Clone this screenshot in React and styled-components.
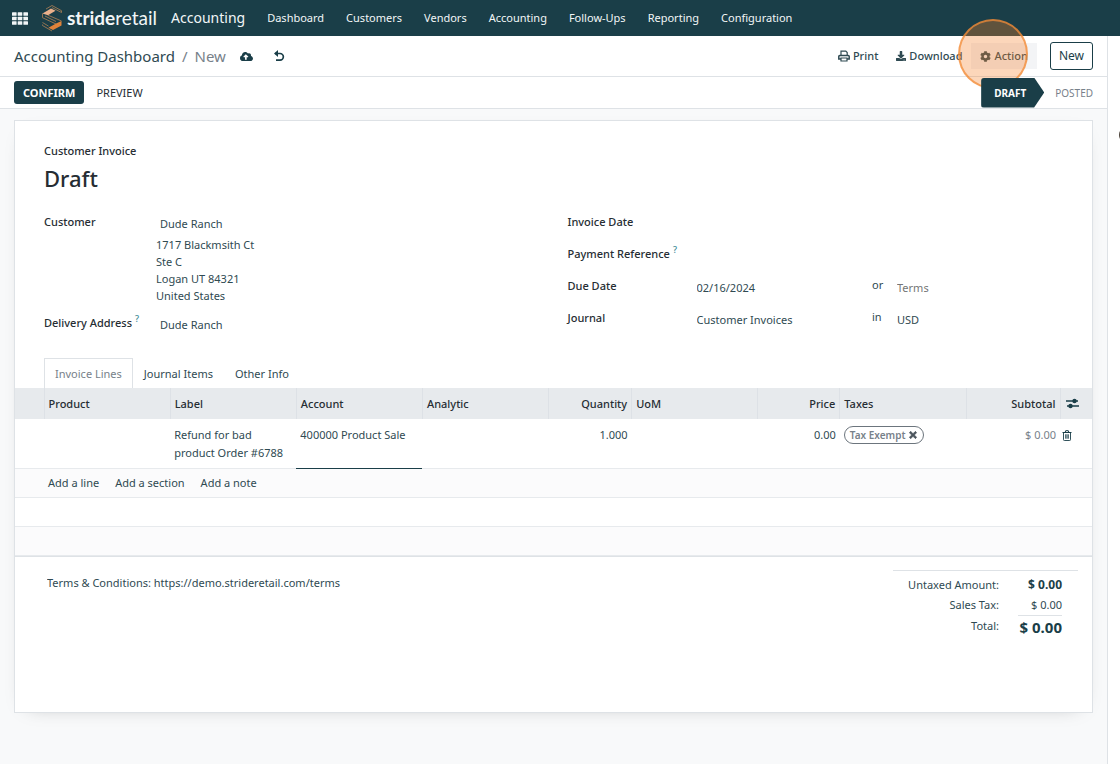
import React from "react";
import styled, { createGlobalStyle } from "styled-components";
import {
  FaCloudUploadAlt,
  FaDownload,
  FaCog,
  FaTimes,
} from "react-icons/fa";

const GlobalStyle = createGlobalStyle`
  :root {
    --brand: #1a3e48;
    --text: #2f4a52;
    --dark: #262d33;
    --muted: #77818a;
    --line: #dee2e6;
  }

  * {
    box-sizing: border-box;
  }

  body {
    margin: 0;
    background: #fff;
    color: var(--text);
    font-family: "Noto Sans", "Open Sans", sans-serif;
    font-size: 11px;
    line-height: 18px;
  }

  button,
  input,
  textarea {
    font: inherit;
    color: inherit;
    background: none;
    border: 0;
    margin: 0;
    padding: 0;
  }

  button {
    cursor: pointer;
    white-space: nowrap;
  }

  a {
    color: inherit;
    text-decoration: none;
  }
`;

const Page = styled.div`
  display: flex;
  flex-direction: column;
  min-height: 100vh;
`;

const Navbar = styled.nav`
  display: flex;
  align-items: center;
  height: 36px;
  padding-left: 12px;
  background: var(--brand);
  color: #f2f6f7;
`;

const AppsButton = styled.button`
  display: flex;
  margin-right: 13px;
`;

const Brand = styled.a`
  display: flex;
  align-items: center;
  gap: 4px;
  margin-right: 14px;
  font-family: Lato, sans-serif;
  font-size: 19px;
  line-height: 24px;

  b {
    font-weight: 700;
  }
`;

const AppName = styled.a`
  margin-right: 11px;
  font-size: 14px;
  line-height: 24px;
`;

const NavLink = styled.a`
  padding: 0 11px;
`;

const Columns = styled.div`
  display: flex;
  flex: 1;
`;

const Main = styled.main`
  display: flex;
  flex-direction: column;
  flex: 1;
  min-width: 0;
  background: #f8f9fa;
`;

const Chatter = styled.aside`
  width: 13px;
  border-left: 1px solid var(--line);
  background: #fff;
  overflow: hidden;
`;

const Avatar = styled.div`
  width: 20px;
  height: 16px;
  margin: 91px 0 0 11px;
  border-radius: 8px;
  background: #4a4038;
`;

const Bar = styled.div`
  display: flex;
  align-items: center;
  height: ${({ $height }) => $height}px;
  padding: 0 14px;
  border-bottom: 1px solid var(--line);
  background: #fff;
`;

const Breadcrumb = styled.div`
  display: flex;
  gap: 7px;
  font-size: 15px;
  line-height: 24px;
  color: var(--muted);

  a {
    color: var(--text);
  }
`;

const IconButton = styled.button`
  display: flex;
  align-items: center;
  height: 18px;
  margin-left: ${({ $gap }) => $gap}px;
  color: var(--brand);
`;

const Actions = styled.div`
  display: flex;
  align-items: center;
  margin-left: auto;
`;

const ActionButton = styled.button`
  display: flex;
  align-items: center;
  gap: 3px;
  height: 26px;
  padding: 0 9px;
  font-weight: 500;
  color: var(--text);
  background: ${({ $active }) => ($active ? "#f3f4f6" : "none")};
`;

const ActionWrap = styled.div`
  position: relative;
`;

const ClickMark = styled.span`
  position: absolute;
  top: -24px;
  left: -13px;
  width: 70px;
  height: 70px;
  border: 2px solid rgba(242, 140, 56, 0.75);
  border-radius: 50%;
  background: rgba(247, 129, 41, 0.32);
  pointer-events: none;
`;

const NewButton = styled.button`
  height: 28px;
  margin-left: 13px;
  padding: 0 8px;
  border: 1px solid var(--brand);
  border-radius: 3px;
  color: var(--brand);
  font-size: 12px;
`;

const Confirm = styled.button`
  height: 23px;
  padding: 0 9px;
  border-radius: 3px;
  background: var(--brand);
  color: #fff;
  font-weight: 700;
`;

const Preview = styled.button`
  padding: 0 12px;
  color: var(--dark);
`;

const Status = styled.div`
  display: flex;
  align-items: center;
  margin-left: auto;
  font-size: 10px;
`;

const StatusCurrent = styled.button`
  height: 30px;
  padding: 0 18px 0 13px;
  border-radius: 3px;
  background: var(--brand);
  color: #fff;
  font-weight: 700;
  clip-path: polygon(0 0, 84% 0, 100% 50%, 84% 100%, 0 100%);
`;

const StatusNext = styled.button`
  padding-left: 11px;
  color: var(--muted);
`;

const Sheet = styled.form`
  display: flex;
  flex-direction: column;
  min-height: 593px;
  margin: 11px 14px 52px;
  border: 1px solid var(--line);
  background: #fff;
  box-shadow: 0 5px 20px -15px rgba(0, 0, 0, 0.4);
`;

const Heading = styled.header`
  padding: 21px 29px 0;
  font-weight: 500;
  color: var(--dark);

  h1 {
    margin: 2px 0 0;
    font-size: 22px;
    line-height: 32px;
    font-weight: 500;
  }
`;

const Groups = styled.div`
  display: grid;
  grid-template-columns: 1fr 1fr;
  padding: 18px 29px 0;
`;

const Group = styled.div`
  display: flex;
  flex-direction: column;
  gap: ${({ $gap }) => $gap}px;
  padding-left: ${({ $indent }) => $indent || 0}px;
`;

const Row = styled.div`
  display: grid;
  grid-template-columns: ${({ $label }) => $label}px 1fr 25px 166px;
  align-items: start;
  min-height: 22px;
`;

const Label = styled.label`
  padding-top: 1px;
  font-weight: 500;
  color: var(--dark);

  sup {
    color: #3c8a96;
    font-size: 9px;
    line-height: 9px;
    margin-left: 3px;
  }
`;

const Field = styled.input`
  width: 100%;
  min-width: 0;
  height: 22px;
  padding-top: 1px;
  text-overflow: ellipsis;
  color: ${({ $muted }) => ($muted ? "var(--muted)" : "var(--text)")};
`;

const Partner = styled.div`
  grid-column: 2 / -1;
  padding-left: 4px;
`;

const Address = styled.address`
  margin: 2px 0 0 -4px;
  font-style: normal;
  line-height: 17px;
`;

const Tabs = styled.div`
  display: flex;
  padding: 0 29px;
  margin: 23px 0 -1px;
`;

const Tab = styled.button`
  height: 31px;
  padding: 0 10px;
  border: 1px solid ${({ $active }) => ($active ? "var(--line)" : "transparent")};
  border-bottom: 0;
  background: #fff;
  color: ${({ $active }) => ($active ? "var(--muted)" : "var(--text)")};
`;

const Lines = styled.table`
  width: 100%;
  table-layout: fixed;
  border-collapse: collapse;

  th,
  td {
    padding: 0 4px;
    text-align: left;
  }

  th {
    height: 31px;
    border-right: 1px solid #dde1e6;
    background: #e7eaed;
    color: var(--dark);
    font-weight: 500;
  }

  th:last-child {
    border-right: 0;
    padding: 0 5px;
  }

  td {
    height: 29px;
    border-bottom: 1px solid #e7eaed;
  }
`;

const LineRow = styled.tr`
  td {
    height: 49px;
    padding-top: 7px;
    vertical-align: top;
  }
`;

const StripedRow = styled.tr`
  background: ${({ $shade }) => ($shade ? "#fbfbfc" : "#fff")};
`;

const AccountCell = styled.td`
  && {
    border-bottom: 1px solid var(--brand);
  }
`;

const CellInput = styled.input`
  display: block;
  width: 100%;
  height: 18px;
  text-align: ${({ $right }) => ($right ? "right" : "left")};
`;

const CellText = styled.textarea`
  display: block;
  width: 100%;
  height: 36px;
  resize: none;
  overflow: hidden;
`;

const NumberHead = styled.th`
  && {
    text-align: right;
  }
`;

const Amount = styled.td`
  && {
    text-align: right;
    color: var(--muted);
  }
`;

const Tag = styled.span`
  display: inline-flex;
  align-items: center;
  gap: 3px;
  height: 18px;
  padding: 0 5px;
  border: 1px solid #6c757d;
  border-radius: 9px;
  color: var(--muted);
  font-size: 10px;
  font-weight: 600;
  white-space: nowrap;

  button {
    display: flex;
    color: #4b545c;
  }
`;

const AddLinks = styled.div`
  display: flex;
  gap: 16px;
`;

const Footer = styled.footer`
  display: flex;
  justify-content: space-between;
  padding: 13px 14px 0 32px;
  border-top: 1px solid var(--line);
`;

const Terms = styled.textarea`
  flex: 1;
  height: 36px;
  margin-top: 4px;
  resize: none;
`;

const Totals = styled.table`
  width: 185px;
  border-top: 1px solid var(--line);
  border-collapse: separate;
  border-spacing: 0;
  padding: 4px 16px 0 0;

  th,
  td {
    height: 20px;
    padding: 0;
    text-align: right;
    font-weight: 400;
    white-space: nowrap;
  }

  th {
    padding-right: 19px;
  }

  td {
    width: 44px;
  }

  tr:first-child td {
    font-size: 12px;
    font-weight: 700;
    color: var(--brand);
  }

  tr:last-child td {
    height: 23px;
    border-top: 1px solid var(--line);
    font-size: 15px;
    font-weight: 700;
    color: var(--brand);
  }
`;

const navItems = [
  "Dashboard",
  "Customers",
  "Vendors",
  "Accounting",
  "Follow-Ups",
  "Reporting",
  "Configuration",
];

function AppsIcon() {
  return (
    <svg width="16" height="13" viewBox="0 0 16 13" fill="currentColor">
      {[0, 5.7, 11.4].map((x) =>
        [0.3, 4.8, 9.3].map((y) => (
          <rect key={`${x}-${y}`} x={x} y={y} width="4.6" height="3.4" rx="0.5" />
        ))
      )}
    </svg>
  );
}

function LogoIcon() {
  return (
    <svg width="22" height="28" viewBox="0 0 22 28" fill="none">
      <path d="M1.500 9.500 10 4.500l4.500 2.300-7.500 4.400Z" fill="#eab18c" />
      <path d="M20.500 17v4.500L12 26l-4.500-2.300L15 19.500Z" fill="#e0833a" />
      <path
        d="M5 5 11 1.500l9.500 5.200v1.800L11 3.600M1.500 9.500v4.200L15 20M7 11.200l13.500 5.800M4 12l11 5.500M1.500 18.500l6 3.600M1.500 20.500v1L11 27"
        stroke="#b08256"
        strokeWidth="0.8"
      />
    </svg>
  );
}

function UndoIcon() {
  return (
    <svg width="12" height="12" viewBox="0 0 12 12" fill="none">
      <path
        d="M2 3.500h5a3.300 3.300 0 0 1 0 6.700H3"
        stroke="currentColor"
        strokeWidth="1.700"
      />
      <path d="M5 0v7L1 3.500Z" fill="currentColor" />
    </svg>
  );
}

function PrintIcon() {
  return (
    <svg width="12" height="12" viewBox="0 0 12 12" fill="none" stroke="currentColor">
      <path d="M3 5.500V1.200h4.800L9.200 2.600V5.500" strokeWidth="1.200" />
      <path d="M3 9H0.800V6.600a1 1 0 0 1 1-1h8.400a1 1 0 0 1 1 1V9H9" strokeWidth="1.500" />
      <path d="M3 8h6v3H3Z" strokeWidth="1.200" />
    </svg>
  );
}

function SlidersIcon() {
  return (
    <svg width="13" height="11" viewBox="0 0 13 11">
      <path d="M0 3h12M1 8h12" stroke="currentColor" strokeWidth="1.300" />
      <circle cx="8.500" cy="3" r="2.200" fill="currentColor" />
      <circle cx="4.500" cy="8" r="2.200" fill="currentColor" />
    </svg>
  );
}

function TrashIcon() {
  return (
    <svg width="10" height="11" viewBox="0 0 10 11" fill="none" stroke="currentColor">
      <path d="M0.500 2.500h9M3.200 2.300 3.700.700h2.600l.5 1.600" />
      <path d="M1.500 2.500v7.200q0 .8.800.8h5.400q.8 0 .8-.8V2.500M3.700 4.300v4.400M5 4.300v4.400M6.300 4.300v4.400" strokeWidth="0.900" />
    </svg>
  );
}

function TopBar() {
  return (
    <Navbar>
      <AppsButton aria-label="Apps">
        <AppsIcon />
      </AppsButton>
      <Brand href="#">
        <LogoIcon />
        <span>
          <b>stride</b>retail
        </span>
      </Brand>
      <AppName href="#">Accounting</AppName>
      {navItems.map((item) => (
        <NavLink key={item} href="#">
          {item}
        </NavLink>
      ))}
    </Navbar>
  );
}

function ControlPanel() {
  return (
    <Bar $height={41}>
      <Breadcrumb>
        <a href="#">Accounting Dashboard</a>
        <span>/</span>
        <span>New</span>
      </Breadcrumb>
      <IconButton $gap={14} aria-label="Save">
        <FaCloudUploadAlt size={13} />
      </IconButton>
      <IconButton $gap={20} aria-label="Discard">
        <UndoIcon />
      </IconButton>
      <Actions>
        <ActionButton>
          <PrintIcon />
          Print
        </ActionButton>
        <ActionButton>
          <FaDownload size={10} />
          Download
        </ActionButton>
        <ActionWrap>
          <ActionButton $active>
            <FaCog size={11} />
            Action
          </ActionButton>
          <ClickMark />
        </ActionWrap>
        <NewButton>New</NewButton>
      </Actions>
    </Bar>
  );
}

function InvoiceLines() {
  return (
    <Lines>
      <colgroup>
        <col width="29" />
        <col />
        <col />
        <col />
        <col />
        <col width="83" />
        <col />
        <col width="82" />
        <col />
        <col width="94" />
        <col width="32" />
      </colgroup>
      <thead>
        <tr>
          <th />
          <th>Product</th>
          <th>Label</th>
          <th>Account</th>
          <th>Analytic</th>
          <NumberHead>Quantity</NumberHead>
          <th>UoM</th>
          <NumberHead>Price</NumberHead>
          <th>Taxes</th>
          <NumberHead>Subtotal</NumberHead>
          <th>
            <IconButton type="button" $gap={0} aria-label="Optional columns">
              <SlidersIcon />
            </IconButton>
          </th>
        </tr>
      </thead>
      <tbody>
        <LineRow>
          <td />
          <td />
          <td>
            <CellText aria-label="Label" defaultValue="Refund for bad product Order #6788" />
          </td>
          <AccountCell>
            <CellInput aria-label="Account" defaultValue="400000 Product Sale" />
          </AccountCell>
          <td />
          <td>
            <CellInput $right aria-label="Quantity" defaultValue="1.000" />
          </td>
          <td />
          <td>
            <CellInput $right aria-label="Price" defaultValue="0.00" />
          </td>
          <td>
            <Tag>
              Tax Exempt
              <button type="button" aria-label="Remove tax">
                <FaTimes size={10} stroke="currentColor" strokeWidth={40} />
              </button>
            </Tag>
          </td>
          <Amount>$ 0.00</Amount>
          <td>
            <IconButton type="button" $gap={-2} aria-label="Delete line">
              <TrashIcon />
            </IconButton>
          </td>
        </LineRow>
        <StripedRow $shade>
          <td />
          <td colSpan="10">
            <AddLinks>
              <a href="#">Add a line</a>
              <a href="#">Add a section</a>
              <a href="#">Add a note</a>
            </AddLinks>
          </td>
        </StripedRow>
        <StripedRow>
          <td colSpan="11" />
        </StripedRow>
        <StripedRow $shade>
          <td colSpan="11" />
        </StripedRow>
      </tbody>
    </Lines>
  );
}

function Invoice() {
  return (
    <Sheet onSubmit={(e) => e.preventDefault()}>
      <Heading>
        <div>Customer Invoice</div>
        <h1>Draft</h1>
      </Heading>
      <Groups>
        <Group $gap={9}>
          <Row $label={112}>
            <Label htmlFor="customer">Customer</Label>
            <Partner>
              <Field id="customer" defaultValue="Dude Ranch" />
              <Address>
                1717 Blackmsith Ct
                <br />
                Ste C
                <br />
                Logan UT 84321
                <br />
                United States
              </Address>
            </Partner>
          </Row>
          <Row $label={112}>
            <Label htmlFor="delivery">
              Delivery Address<sup>?</sup>
            </Label>
            <Partner>
              <Field id="delivery" defaultValue="Dude Ranch" />
            </Partner>
          </Row>
        </Group>
        <Group $gap={10} $indent={14}>
          <Row $label={129}>
            <Label htmlFor="invoice-date">Invoice Date</Label>
            <Field id="invoice-date" />
          </Row>
          <Row $label={129}>
            <Label htmlFor="payment-ref">
              Payment Reference<sup>?</sup>
            </Label>
            <Field id="payment-ref" />
          </Row>
          <Row $label={129}>
            <Label htmlFor="due-date">Due Date</Label>
            <Field id="due-date" defaultValue="02/16/2024" />
            <span>or</span>
            <Field $muted aria-label="Terms" placeholder="Terms" />
          </Row>
          <Row $label={129}>
            <Label htmlFor="journal">Journal</Label>
            <Field id="journal" defaultValue="Customer Invoices" />
            <span>in</span>
            <Field aria-label="Currency" defaultValue="USD" />
          </Row>
        </Group>
      </Groups>
      <Tabs>
        <Tab type="button" $active>
          Invoice Lines
        </Tab>
        <Tab type="button">Journal Items</Tab>
        <Tab type="button">Other Info</Tab>
      </Tabs>
      <InvoiceLines />
      <Footer>
        <Terms
          aria-label="Terms and conditions"
          defaultValue="Terms & Conditions: https://demo.strideretail.com/terms"
        />
        <Totals>
          <tbody>
            <tr>
              <th>Untaxed Amount:</th>
              <td>$ 0.00</td>
            </tr>
            <tr>
              <th>Sales Tax:</th>
              <td>$ 0.00</td>
            </tr>
            <tr>
              <th>Total:</th>
              <td>$ 0.00</td>
            </tr>
          </tbody>
        </Totals>
      </Footer>
    </Sheet>
  );
}

export default function App() {
  return (
    <Page>
      <GlobalStyle />
      <TopBar />
      <Columns>
        <Main>
          <ControlPanel />
          <Bar $height={32}>
            <Confirm>CONFIRM</Confirm>
            <Preview>PREVIEW</Preview>
            <Status>
              <StatusCurrent>DRAFT</StatusCurrent>
              <StatusNext>POSTED</StatusNext>
            </Status>
          </Bar>
          <Invoice />
        </Main>
        <Chatter>
          <Avatar />
        </Chatter>
      </Columns>
    </Page>
  );
}
